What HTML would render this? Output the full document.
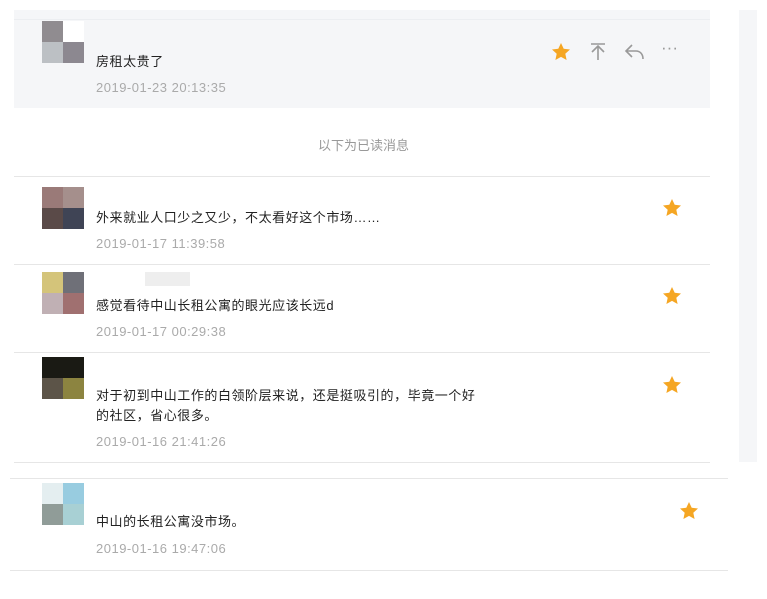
<!DOCTYPE html>
<html><head><meta charset="utf-8"><style>
*{margin:0;padding:0;box-sizing:border-box}
body{width:767px;height:599px;background:#fff;position:relative;overflow:hidden;font-family:"Liberation Sans","Noto Sans CJK SC",sans-serif}
.abs{position:absolute}
.av{position:absolute;width:42px;height:42px;left:42px}
.av i{position:absolute;width:21px;height:21px}
.t{position:absolute;left:96px;font-size:13px;color:#222;line-height:20px;letter-spacing:0.55px}
.d{position:absolute;left:96px;font-size:13px;color:#aaa;letter-spacing:0.5px}
.line{position:absolute;height:1px;background:#e6e6e6}
.star{position:absolute;width:20px;height:20px}
</style></head><body>
<div class="abs" style="left:14px;top:10px;width:696px;height:98px;background:#f5f6f8"></div>
<div class="line" style="left:14px;top:19px;width:696px;background:#eceef1"></div>
<div class="abs" style="left:739px;top:10px;width:18px;height:452px;background:#f5f6f8"></div>

<svg width="0" height="0" style="position:absolute"><defs><path id="st" d="M10 1l2.7 5.8 6.3.7-4.7 4.3 1.3 6.2L10 14.9 4.4 18l1.3-6.2L1 7.5l6.3-.7z" fill="#f5a623"/></defs></svg>

<div class="av" style="top:21px"><i style="left:0;top:0;background:#908c90"></i><i style="left:21px;top:0;background:#fff"></i><i style="left:0;top:21px;background:#bcc0c4"></i><i style="left:21px;top:21px;background:#8c8890"></i></div>
<div class="t" style="top:52px">房租太贵了</div>
<div class="d" style="top:80px">2019-01-23 20:13:35</div>
<svg class="star" style="left:551px;top:42px"><use href="#st"/></svg>
<svg class="abs" style="left:589px;top:42px" width="18" height="20" fill="none" stroke="#999" stroke-width="1.6"><path d="M2 2h14M9 18V4M3 10l6-6 6 6"/></svg>
<svg class="abs" style="left:624px;top:43px" width="22" height="18" fill="none" stroke="#999" stroke-width="1.6"><path d="M8 2L2 8l6 6M2 8h10c4 0 7 3 7 8"/></svg>
<div class="abs" style="left:661px;top:38px;font-size:17px;color:#999;letter-spacing:0px">···</div>

<div class="abs" style="left:0;top:135px;width:727px;text-align:center;font-size:13px;color:#999">以下为已读消息</div>
<div class="line" style="left:14px;top:176px;width:696px"></div>

<div class="av" style="top:187px"><i style="left:0;top:0;background:#9a7a78"></i><i style="left:21px;top:0;background:#a58f8c"></i><i style="left:0;top:21px;background:#5a4a48"></i><i style="left:21px;top:21px;background:#3f4455"></i></div>
<div class="t" style="top:208px">外来就业人口少之又少，不太看好这个市场……</div>
<div class="d" style="top:236px">2019-01-17 11:39:58</div>
<svg class="star" style="left:662px;top:198px"><use href="#st"/></svg>
<div class="line" style="left:14px;top:264px;width:696px"></div>

<div class="av" style="top:272px"><i style="left:0;top:0;background:#d4c47a"></i><i style="left:21px;top:0;background:#6f7078"></i><i style="left:0;top:21px;background:#c0b0b4"></i><i style="left:21px;top:21px;background:#a07070"></i></div>
<div class="abs" style="left:145px;top:272px;width:45px;height:14px;background:#eee"></div>
<div class="t" style="top:296px">感觉看待中山长租公寓的眼光应该长远d</div>
<div class="d" style="top:324px">2019-01-17 00:29:38</div>
<svg class="star" style="left:662px;top:286px"><use href="#st"/></svg>
<div class="line" style="left:14px;top:352px;width:696px"></div>

<div class="av" style="top:357px"><i style="left:0;top:0;background:#1a1a14"></i><i style="left:21px;top:0;background:#1a1a14"></i><i style="left:0;top:21px;background:#5c5448"></i><i style="left:21px;top:21px;background:#8c8440"></i></div>
<div class="t" style="top:386px">对于初到中山工作的白领阶层来说，还是挺吸引的，毕竟一个好<br>的社区，省心很多。</div>
<div class="d" style="top:434px">2019-01-16 21:41:26</div>
<svg class="star" style="left:662px;top:375px"><use href="#st"/></svg>
<div class="line" style="left:14px;top:462px;width:696px"></div>
<div class="line" style="left:10px;top:478px;width:718px"></div>

<div class="av" style="top:483px"><i style="left:0;top:0;background:#e4eef0"></i><i style="left:21px;top:0;background:#98cce0"></i><i style="left:0;top:21px;background:#909c98"></i><i style="left:21px;top:21px;background:#a8d0d4"></i></div>
<div class="t" style="top:512px">中山的长租公寓没市场。</div>
<div class="d" style="top:541px">2019-01-16 19:47:06</div>
<svg class="star" style="left:679px;top:501px"><use href="#st"/></svg>
<div class="line" style="left:10px;top:570px;width:718px"></div>
</body></html>
